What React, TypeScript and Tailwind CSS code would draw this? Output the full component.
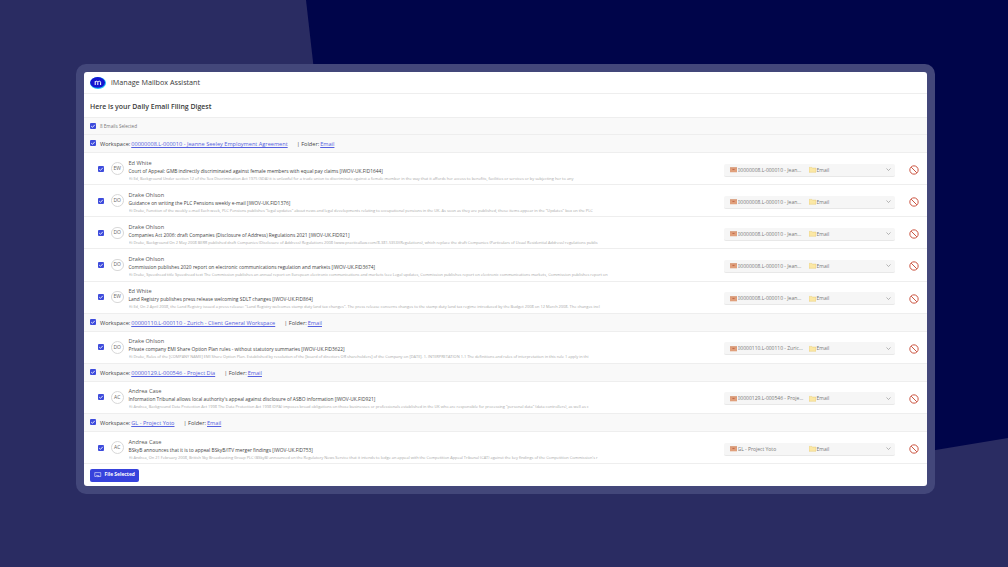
const emails1 = [
  { name: "Ed White", init: "EW", subject: "Court of Appeal: GMB indirectly discriminated against female members with equal pay claims [IWOV-UK.FID1644]", preview: "Hi Ed, Background Under section 12 of the Sex Discrimination Act 1975 (SDA) it is unlawful for a trade union to discriminate against a female member in the way that it affords her access to benefits, facilities or services or by subjecting her to any" },
  { name: "Drake Ohlson", init: "DO", subject: "Guidance on writing the PLC Pensions weekly e-mail [IWOV-UK.FID1376]", preview: "Hi Drake, Function of the weekly e-mail Each week, PLC Pensions publishes \"legal updates\" about news and legal developments relating to occupational pensions in the UK. As soon as they are published, these items appear in the \"Updates\" box on the PLC" },
  { name: "Drake Ohlson", init: "DO", subject: "Companies Act 2006: draft Companies (Disclosure of Address) Regulations 2021 [IWOV-UK.FID921]", preview: "Hi Drake, Background On 2 May 2008 BERR published draft Companies (Disclosure of Address) Regulations 2008 (www.practicallaw.com/8-381-5353)(Regulations), which replace the draft Companies (Particulars of Usual Residential Address) regulations publis" },
  { name: "Drake Ohlson", init: "DO", subject: "Commission publishes 2020 report on electronic communications regulation and markets [IWOV-UK.FID3674]", preview: "Hi Drake, Speedread title Speedread text The Commission publishes an annual report on European electronic communications and markets (see Legal updates, Commission publishes report on electronic communications markets, Commission publishes report on" },
  { name: "Ed White", init: "EW", subject: "Land Registry publishes press release welcoming SDLT changes [IWOV-UK.FID864]", preview: "Hi Ed, On 2 April 2008, the Land Registry issued a press release: \"Land Registry welcomes stamp duty land tax changes\". The press release concerns changes to the stamp duty land tax regime introduced by the Budget 2008 on 12 March 2008. The changes incl" },
];

const groups = [
  { ws: "00000008.L-000010 - Jeanne Seeley Employment Agreement", sel: "00000008.L-000010 - Jean...", emails: emails1 },
  { ws: "00000110.L-000110 - Zurich - Client General Workspace", sel: "00000110.L-000110 - Zuric...", emails: [
    { name: "Drake Ohlson", init: "DO", subject: "Private company EMI Share Option Plan rules - without statutory summaries [IWOV-UK.FID3622]", preview: "Hi Drake, Rules of the [COMPANY NAME] EMI Share Option Plan. Established by resolution of the [board of directors OR shareholders] of the Company on [DATE]. 1. INTERPRETATION 1.1 The definitions and rules of interpretation in this rule 1 apply in thi" },
  ] },
  { ws: "00000129.L-000546 - Project Dia", sel: "00000129.L-000546 - Proje...", emails: [
    { name: "Andrea Case", init: "AC", subject: "Information Tribunal allows local authority's appeal against disclosure of ASBO information [IWOV-UK.FID921]", preview: "Hi Andrea, Background Data Protection Act 1998 The Data Protection Act 1998 (DPA) imposes broad obligations on those businesses or professionals established in the UK who are responsible for processing \"personal data\" (data controllers), as well as c" },
  ] },
  { ws: "GL - Project Yoto", sel: "GL - Project Yoto", emails: [
    { name: "Andrea Case", init: "AC", subject: "BSkyB announces that it is to appeal BSkyB/ITV merger findings [IWOV-UK.FID753]", preview: "Hi Andrea, On 21 February 2008, British Sky Broadcasting Group PLC (BSkyB) announced on the Regulatory News Service that it intends to lodge an appeal with the Competition Appeal Tribunal (CAT) against the key findings of the Competition Commission's r" },
  ] },
];

function Check() {
  return (
    <span className="flex h-[6px] w-[6px] shrink-0 items-center justify-center rounded-[1px] bg-[#3d4bdc]">
      <svg viewBox="0 0 10 10" className="h-[6px] w-[6px]" fill="none" stroke="#fff" strokeWidth="1.4">
        <path d="M2 5.2 4.2 7.2 8 3" />
      </svg>
    </span>
  );
}

function Workspace({ ws }: { ws: string }) {
  return (
    <div className="flex h-[18px] items-center border-b border-[#eeeeee] bg-[#f9f9f9] pl-[6px]">
      <span className="mb-[1px]"><Check /></span>
      <div className="flex items-center pt-[2px]">
        <span className="ml-[4px] text-[5.6px] font-medium text-[#444444]">Workspace:</span>
        <span className="ml-[1px] text-[5.6px] text-[#5560e0] underline">{ws}</span>
        <span className="ml-[9px] text-[5.6px] font-medium text-[#444444]">| Folder:</span>
        <span className="ml-[1px] text-[5.6px] text-[#5560e0] underline">Email</span>
      </div>
    </div>
  );
}

function Row({ e, sel }: { e: (typeof emails1)[number]; sel: string }) {
  return (
    <div className="flex h-[32.15px] items-center border-b border-[#eeeeee] pl-[14px]">
      <Check />
      <span className="ml-[7px] flex h-[12.5px] w-[12.5px] shrink-0 items-center justify-center rounded-full border border-[#d8d8d8] text-[5px] text-[#666666]">{e.init}</span>
      <div className="ml-[5px] flex w-[589px] min-w-0 flex-col pt-[3px]">
        <span className="text-[5.6px] leading-[8px] text-[#555555]">{e.name}</span>
        <span className="whitespace-nowrap text-[4.85px] leading-[8px] text-[#444444]">{e.subject}</span>
        <span className="truncate text-[3.93px] leading-[7px] text-[#a8a8a8]">{e.preview}</span>
      </div>
      <div className="ml-[6px] mt-[3px] flex h-[13px] w-[171px] shrink-0 items-center rounded-[2px] border-b border-[#e8e8e8] bg-[#f6f6f6] pl-[6px] text-[5px] text-[#777777]">
        <svg viewBox="0 0 10 10" className="h-[7px] w-[7px] shrink-0">
          <path d="M0 2h10v7H0z" fill="#e0a07c" />
          <path d="M3.5 5h3" stroke="#c4694a" strokeWidth="1.6" fill="none" />
          <path d="M0 2.5h10" stroke="#d08a66" strokeWidth="1" fill="none" />
        </svg>
        <span className="ml-[1px] w-[71px] truncate whitespace-nowrap pt-[1.5px]">{sel}</span>
        <svg viewBox="0 0 10 10" className="h-[7px] w-[7px] shrink-0">
          <path d="M0 2h4l1 1h5v6H0z" fill="#fbe8a6" stroke="#e5c76b" strokeWidth="0.6" />
        </svg>
        <span className="ml-[1px] pt-[1.5px]">Email</span>
        <svg viewBox="0 0 10 10" className="ml-auto mr-[4px] h-[5px] w-[5px]" fill="none" stroke="#888888" strokeWidth="1.2">
          <path d="M1 3l4 4 4-4" />
        </svg>
      </div>
      <svg viewBox="0 0 12 12" className="ml-[14px] mt-[3px] h-[10px] w-[10px] shrink-0" fill="none" stroke="#cb5542" strokeWidth="1.2">
        <circle cx="6" cy="6" r="5" />
        <path d="M2.6 2.6l6.8 6.8" />
      </svg>
    </div>
  );
}

export default function App() {
  return (
    <div className="relative flex h-[567px] w-[1008px] overflow-hidden bg-[#2a2c62] pl-[76px] pt-[64px] font-['Open_Sans','Noto_Sans',sans-serif]">
      <svg className="absolute inset-0 h-[567px] w-[1008px]" viewBox="0 0 1008 567" aria-hidden="true">
        <path d="M306 0H1008V438L700 489 340 300Z" fill="#00054a" />
      </svg>
      <div className="relative h-[430px] w-[859px] rounded-[10px] bg-[#43477a] pl-[8px] pt-[8px]">
        <div className="flex h-[414px] w-[843px] flex-col overflow-hidden rounded-[3px] bg-white">
          <div className="flex h-[22px] shrink-0 items-center border-b border-[#eeeeee] pl-[6px]">
            <svg viewBox="0 0 16 12" className="h-[12px] w-[16px] shrink-0">
              <ellipse cx="8" cy="6" rx="8" ry="6" fill="#1fc0f5" />
              <ellipse cx="7.6" cy="5.4" rx="7.4" ry="5.3" fill="#1414d0" />
              <path d="M5.2 8V4.2M5.2 5c1-1.2 2.6-1 2.6.3V8M7.8 5c1-1.2 2.8-1 2.8.3V8" stroke="#fff" strokeWidth="1" fill="none" />
            </svg>
            <span className="ml-[5px] text-[7.2px] text-[#3a3a3a]">iManage Mailbox Assistant</span>
          </div>
          <div className="flex h-[24px] shrink-0 items-center border-b border-[#eeeeee] pl-[6px] pt-[3px] text-[6.95px] font-semibold text-[#3a3a3a]">
            Here is your Daily Email Filing Digest
          </div>
          <div className="flex h-[17px] shrink-0 items-center border-b border-[#eeeeee] bg-[#f9f9f9] pl-[6px]">
            <Check />
            <span className="ml-[4px] pt-[1px] text-[4.6px] text-[#777777]">8 Emails Selected</span>
          </div>
          {groups.map((g) => (
            <div key={g.ws} className="flex flex-col">
              <Workspace ws={g.ws} />
              {g.emails.map((e) => (
                <Row key={e.subject} e={e} sel={g.sel} />
              ))}
            </div>
          ))}
          <div className="flex flex-1 items-center pl-[6px]">
            <button className="flex h-[13px] w-[49px] items-center justify-center gap-[3px] rounded-[2px] bg-[#3742dc] text-[4.9px] font-bold text-white">
              <svg viewBox="0 0 12 10" className="h-[6px] w-[7.5px]" fill="none" stroke="#fff" strokeWidth="0.9">
                <path d="M1 1h10v6.5H7M1 1v6.5h3M4 5.5l1.5 3 1-1.5 2-.3z" />
              </svg>
              File Selected
            </button>
          </div>
        </div>
      </div>
    </div>
  );
}
